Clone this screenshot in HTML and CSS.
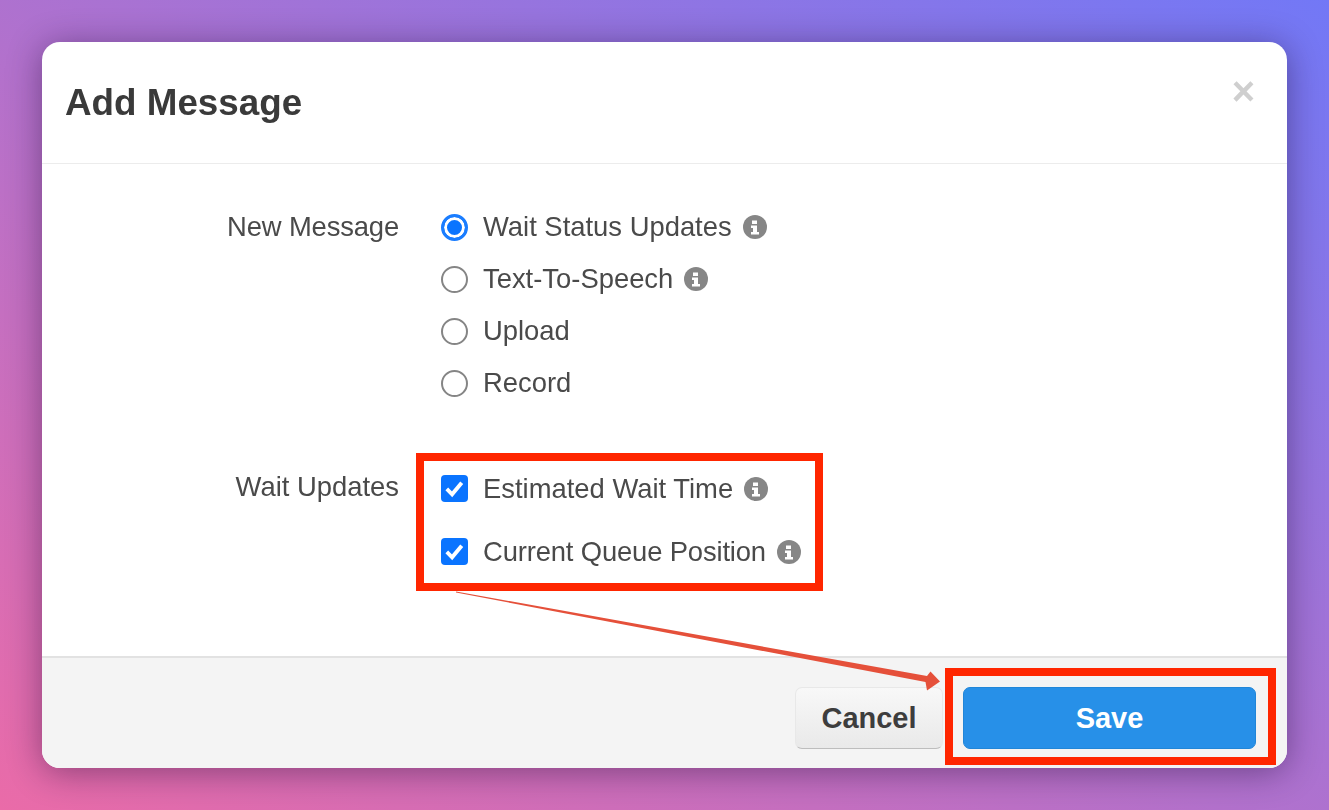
FILE: index.html
```html
<!DOCTYPE html>
<html lang="en">

<head>
  <meta charset="UTF-8">
  <meta name="viewport" content="width=device-width, initial-scale=1.0">
  <title>Add Message</title>
  <link rel="stylesheet" href="styles.css">
</head>

<body>
  <main class="stage">
    <div class="modal">
      <header class="modal-header">
        <h1 class="modal-title">Add Message</h1>
        <span class="modal-close">×</span>
      </header>

      <div class="modal-body">
        <div class="form-row">
          <div class="form-label is-Tight">New Message</div>
          <div class="radio-list">
            <label class="option">
              <span class="radio is-Checked"></span>
              <span>Wait Status Updates</span>
              <svg class="info" viewBox="0 0 24 24"><circle cx="12" cy="12" r="12" /><path class="info-mark" d="M9 5.500h5v3.500H9zM8 10.500h6v6.500h2v2.500H8V17h2v-4H8z" /></svg>
            </label>
            <label class="option">
              <span class="radio"></span>
              <span>Text-To-Speech</span>
              <svg class="info" viewBox="0 0 24 24"><circle cx="12" cy="12" r="12" /><path class="info-mark" d="M9 5.500h5v3.500H9zM8 10.500h6v6.500h2v2.500H8V17h2v-4H8z" /></svg>
            </label>
            <label class="option">
              <span class="radio"></span>
              <span>Upload</span>
            </label>
            <label class="option">
              <span class="radio"></span>
              <span>Record</span>
            </label>
          </div>
        </div>

        <div class="form-row form-row-wait">
          <div class="form-label">Wait Updates</div>
          <div class="check-list">
            <label class="option">
              <span class="checkbox"><svg viewBox="0 0 28 28"><path d="M6 14.500l5.500 5.500 10-12" /></svg></span>
              <span>Estimated Wait Time</span>
              <svg class="info" viewBox="0 0 24 24"><circle cx="12" cy="12" r="12" /><path class="info-mark" d="M9 5.500h5v3.500H9zM8 10.500h6v6.500h2v2.500H8V17h2v-4H8z" /></svg>
            </label>
            <label class="option">
              <span class="checkbox"><svg viewBox="0 0 28 28"><path d="M6 14.500l5.500 5.500 10-12" /></svg></span>
              <span class="is-Tight">Current Queue Position</span>
              <svg class="info" viewBox="0 0 24 24"><circle cx="12" cy="12" r="12" /><path class="info-mark" d="M9 5.500h5v3.500H9zM8 10.500h6v6.500h2v2.500H8V17h2v-4H8z" /></svg>
            </label>
          </div>
        </div>
      </div>

      <footer class="modal-footer">
        <button class="btn btn-cancel">Cancel</button>
        <button class="btn btn-save">Save</button>
      </footer>
    </div>

    <!-- annotations drawn on top of the screenshot -->
    <div class="mark mark-options"></div>
    <div class="mark mark-save"></div>
    <svg class="arrow" viewBox="0 0 1329 810">
      <path d="M456 591.500L927 676L930.500 671.500L940 681.500L927 690.500L925.500 682L456 592.500z" />
    </svg>
  </main>
</body>

</html>
```

FILE: styles.css
```css
* {
  box-sizing: border-box;
}

html,
body {
  margin: 0;
  height: 100%;
}

body {
  font-family: "Liberation Sans", Arial, sans-serif;
  color: #4a4a4a;
}

.stage {
  position: relative;
  width: 1329px;
  height: 810px;
  padding: 42px;
  overflow: hidden;
  background: linear-gradient(to top right, #ea6ba8, #7278f6);
}

.modal {
  display: flex;
  flex-direction: column;
  height: 726px;
  border-radius: 18px;
  background-color: #fff;
  overflow: hidden;
  box-shadow: 0 4px 34px rgba(30, 10, 50, 0.45);
  filter: blur(0.7px);
}

/* header */
.modal-header {
  display: flex;
  justify-content: space-between;
  align-items: flex-start;
  height: 122px;
  padding: 41px 32px 0 23px;
  border-bottom: 1px solid #ececec;
}

.modal-title {
  margin: 0;
  font-size: 36.800px;
  line-height: 40px;
  font-weight: bold;
  color: #3a3a3a;
}

.modal-close {
  margin-top: -15px;
  font-size: 40px;
  line-height: 46px;
  font-weight: bold;
  color: #cfcfcf;
}

/* form */
.modal-body {
  flex: 1;
  padding-top: 37px;
}

.form-row {
  display: flex;
}

.form-row-wait {
  margin-top: 52px;
}

.form-label {
  width: 357px;
  height: 52px;
  line-height: 52px;
  font-size: 27.400px;
  text-align: right;
}

.is-Tight {
  letter-spacing: -0.150px;
}

.radio-list,
.check-list {
  margin-left: 42px;
}

.check-list {
  margin-top: -4px;
}

.radio-list .option {
  height: 52px;
}

.check-list .option {
  height: 63px;
}

.option {
  display: flex;
  align-items: center;
  font-size: 27.400px;
}

.radio {
  width: 27px;
  height: 27px;
  margin-right: 15px;
  border: 2px solid #858585;
  border-radius: 50%;
  background-color: #fff;
}

.radio.is-Checked {
  border: 3px solid #1a7dff;
  background-color: #0a74ff;
  box-shadow: inset 0 0 0 3px #fff;
}

.checkbox {
  display: block;
  width: 27px;
  height: 27px;
  margin-right: 15px;
  border-radius: 4px;
  background-color: #0a74ff;
}

.checkbox svg {
  display: block;
  fill: none;
  stroke: #fff;
  stroke-width: 4;
}

.info {
  width: 24px;
  height: 24px;
  margin-left: 11px;
  fill: #868686;
}

.info-mark {
  fill: #fff;
}

/* footer */
.modal-footer {
  display: flex;
  justify-content: flex-end;
  gap: 20px;
  height: 112px;
  padding: 29px 31px 0 0;
  border-top: 2px solid #e2e2e2;
  background-color: #f4f4f4;
}

.btn {
  height: 62px;
  border-radius: 7px;
  font-family: inherit;
  font-size: 29px;
  font-weight: bold;
}

.btn-cancel {
  width: 148px;
  border: 1px solid #e8e8e8;
  border-bottom-color: #bdbdbd;
  background: linear-gradient(#f8f8f8, #e9e9e9);
  color: #3d3d3d;
}

.btn-save {
  width: 293px;
  border: 1px solid #2186d8;
  background-color: #2790e8;
  color: #fff;
}

/* annotations */
.mark {
  position: absolute;
  border: 8px solid #ff2600;
}

.mark-options {
  left: 416px;
  top: 453px;
  width: 407px;
  height: 138px;
}

.mark-save {
  left: 945px;
  top: 668px;
  width: 331px;
  height: 97px;
}

.arrow {
  position: absolute;
  left: 0;
  top: 0;
  width: 1329px;
  height: 810px;
  fill: #e5503a;
}
```
